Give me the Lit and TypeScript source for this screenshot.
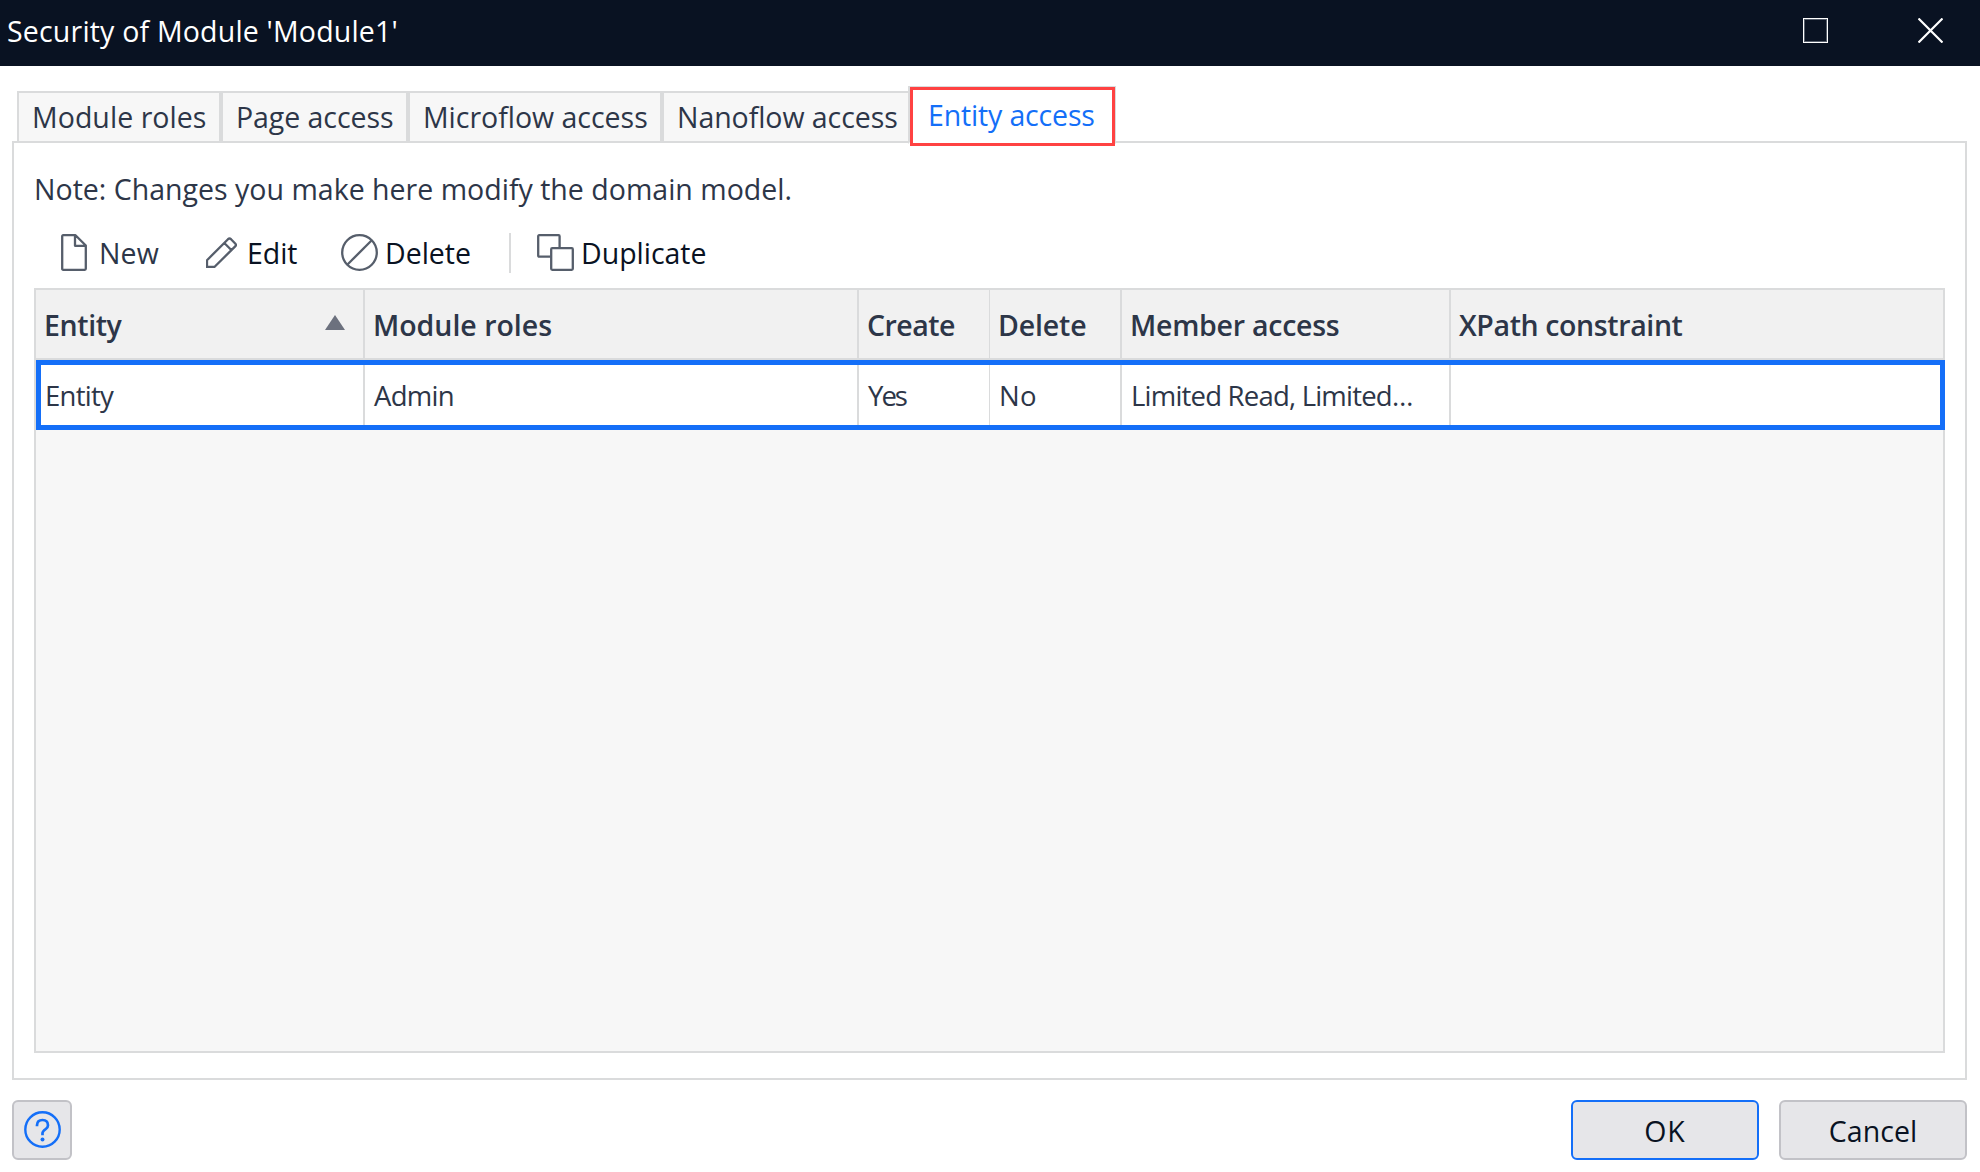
import { LitElement, html, css, svg, nothing } from "lit";
import { customElement, property } from "lit/decorators.js";
import { classMap } from "lit/directives/class-map.js";

/** Text whose tracking is adjusted so that it occupies a fixed advance width. */
@customElement("ui-label")
class UiLabel extends LitElement {
  @property() text = "";
  @property({ type: Number }) span = 0;

  static styles = css`
    :host { display: block; flex: none; }
    .text { display: inline-block; white-space: pre; vertical-align: top; }
  `;

  render() {
    return html`<span class="text">${this.text}</span>`;
  }

  updated() {
    const el = this.renderRoot.querySelector(".text") as HTMLElement;
    el.style.letterSpacing = "0px";
    const natural = el.getBoundingClientRect().width;
    el.style.letterSpacing = `${(this.span - natural) / this.text.length}px`;
  }
}

const label = (text: string, span: number) =>
  html`<ui-label .text=${text} .span=${span}></ui-label>`;

const icons = {
  file: svg`<path d="M1.2 2.2 Q1.2 1.2 2.2 1.2 H14.5 L24.8 11.5 V34.8 Q24.8 35.8 23.8 35.8 H2.2 Q1.2 35.8 1.2 34.8 Z M14 1.2 V11.8 H24.8"/>`,
  pencil: svg`<path d="M1 30 V23.2 L22 2.2 Q23.5 .8 25 2.2 L29.2 6.5 Q30.6 8 29.2 9.4 L8.4 30 Z M18.3 6 L25.3 13"/>`,
  forbid: svg`<circle cx="18.5" cy="18.5" r="17.3"/><path d="M6.5 30.5 L30.5 6.5"/>`,
  copy: svg`<path d="M13.5 22.6 H2.2 Q1.2 22.6 1.2 21.6 V2.2 Q1.2 1.2 2.2 1.2 H21.6 Q22.6 1.2 22.6 2.2 V13.5"/><rect x="14.2" y="14.2" width="21.6" height="21.6" rx="1"/>`,
};

const tabs = [
  { text: "Module roles", span: 174.5 },
  { text: "Page access", span: 157.5 },
  { text: "Microflow access", span: 224.7 },
  { text: "Nanoflow access", span: 220.7 },
  { text: "Entity access", span: 166.8, active: true },
];

const columns = [
  { head: "Entity", headSpan: 77.5, cell: "Entity", cellSpan: 68, sorted: true },
  { head: "Module roles", headSpan: 179, cell: "Admin", cellSpan: 80 },
  { head: "Create", headSpan: 88, cell: "Yes", cellSpan: 38, thin: true },
  { head: "Delete", headSpan: 88.5, cell: "No", cellSpan: 38 },
  { head: "Member access", headSpan: 209.5, cell: "Limited Read, Limited…", cellSpan: 281.5 },
  { head: "XPath constraint", headSpan: 223.5, cell: "", cellSpan: 0, last: true },
];

@customElement("app-root")
class AppRoot extends LitElement {
  static styles = css`
    :host {
      display: flex;
      flex-direction: column;
      height: 1172px;
      background: #fff;
      color: #2d3648;
      font-family: "Open Sans", "Noto Sans", sans-serif;
      font-size: 28.5px;
      line-height: 40px;
      overflow: hidden;
    }
    * { box-sizing: border-box; }
    svg { display: block; flex: none; fill: none; }

    .titlebar {
      flex: none;
      display: flex;
      align-items: center;
      height: 66px;
      padding: 0 37px 5px 7px;
      background: #091222;
      color: #fff;
    }
    .controls { display: flex; gap: 90px; margin-left: auto; }

    .tabs {
      flex: none;
      display: flex;
      align-items: flex-start;
      height: 75px;
      padding: 25px 0 0 17px;
    }
    .tab {
      display: flex;
      align-items: center;
      height: 52px;
      padding: 0 12.5px 0 13px;
      border: 2px solid #dadbdc;
      background: #f7f7f7;
    }
    .tab:nth-child(1) { width: 204px; }
    .tab:nth-child(2) { width: 187px; }
    .tab:nth-child(3) { width: 254px; }
    .tab:nth-child(4) { width: 250px; }
    .tab.active {
      position: relative;
      z-index: 1;
      height: 58px;
      width: 208px;
      margin: -5px 0 0 -4px;
      padding: 0 0 0 18px;
      background: #fff;
      border-bottom-color: #fff;
      color: #146ff8;
    }
    .marker {
      position: absolute;
      inset: -1px -1px -4px 0;
      border: 3px solid #ff4242;
    }

    .panel {
      flex: none;
      display: flex;
      flex-direction: column;
      height: 939px;
      margin: 0 13px 0 12px;
      padding: 26px 20px 25px;
      border: 2px solid #dadbdc;
    }
    .note { height: 40px; }
    .toolbar {
      display: flex;
      align-items: center;
      height: 40px;
      margin: 24px 0 15px;
      padding-left: 27px;
      color: #091222;
    }
    .tool { display: flex; align-items: center; }
    .tool svg { margin-bottom: 1px; stroke: #565e6b; stroke-width: 2.3; stroke-linejoin: round; }
    .tool.new { gap: 12px; width: 145px; color: #2d3648; }
    .tool.edit { gap: 10px; width: 135px; }
    .tool.delete { gap: 7px; width: 168px; }
    .tool.copy { gap: 7px; }
    .divider { width: 2px; height: 40px; margin-right: 26px; background: #dadbdc; }

    .table {
      flex: 1;
      border: 2px solid #dadbdc;
      background: #f7f7f7;
    }
    .row {
      display: grid;
      grid-template-columns: 329px 494px 131px 132px 329px 1fr;
    }
    .head {
      height: 70px;
      border-bottom: 2px solid #dadbdc;
      background: #f1f1f1;
      font-weight: 600;
    }
    .selected {
      position: relative;
      height: 70px;
      margin-right: -2px;
      background: #fff;
      font-size: 27.5px;
    }
    .selected::after {
      content: "";
      position: absolute;
      inset: 0;
      border: 5px solid #146ff8;
    }
    .cell {
      display: flex;
      align-items: center;
      justify-content: space-between;
      padding: 2px 18px 0 8px;
      border-right: 2px solid #dadbdc;
    }
    .selected .cell { padding-left: 9px; }
    .cell.thin { border-right-width: 1px; }
    .cell.last { border-right: 0; }
    .sort { margin-top: -6px; fill: #6c717e; }

    .footer {
      display: flex;
      gap: 20px;
      padding: 20px 13px 0 12px;
      color: #091222;
    }
    .button {
      display: flex;
      align-items: center;
      justify-content: center;
      width: 188px;
      height: 60px;
      padding: 2px 0 0;
      border: 2px solid #c2c2c7;
      border-radius: 6px;
      background: #e6e6e9;
      color: inherit;
      font: inherit;
    }
    .button.primary { border-color: #146ff8; }
    .button.help { width: 60px; padding: 0 0 1px 1px; margin-right: auto; }
  `;

  private tool(kind: string, w: number, h: number, icon: unknown, text: string, span: number) {
    return html`<div class="tool ${kind}">
      <svg width=${w} height=${h} viewBox="0 0 ${w} ${h}">${icon}</svg>${label(text, span)}
    </div>`;
  }

  render() {
    return html`
      <header class="titlebar">
        ${label("Security of Module 'Module1'", 391)}
        <div class="controls">
          <svg width="25" height="25"><rect x="1.5" y="1.5" width="22" height="22" stroke="#565e6b"/><rect x=".5" y=".5" width="24" height="24" stroke="#fff"/></svg>
          <svg width="25" height="25"><path d="M.5 .5 L24.5 24.5 M24.5 .5 L.5 24.5" stroke="#fff" stroke-width="2.2"/></svg>
        </div>
      </header>
      <nav class="tabs">
        ${tabs.map((t) => html`<div class=${classMap({ tab: true, active: !!t.active })}>
          ${label(t.text, t.span)}${t.active ? html`<div class="marker"></div>` : nothing}
        </div>`)}
      </nav>
      <main class="panel">
        <div class="note">${label("Note: Changes you make here modify the domain model.", 758)}</div>
        <div class="toolbar">
          ${this.tool("new", 26, 37, icons.file, "New", 60)}
          ${this.tool("edit", 31, 31, icons.pencil, "Edit", 50.5)}
          ${this.tool("delete", 37, 37, icons.forbid, "Delete", 86)}
          <div class="divider"></div>
          ${this.tool("copy", 37, 37, icons.copy, "Duplicate", 125.5)}
        </div>
        <div class="table">
          <div class="row head">
            ${columns.map((c) => html`<div class=${classMap({ cell: true, thin: !!c.thin, last: !!c.last })}>
              ${label(c.head, c.headSpan)}
              ${c.sorted ? html`<svg class="sort" width="20" height="15"><path d="M10 0 L20 15 H0 Z"/></svg>` : nothing}
            </div>`)}
          </div>
          <div class="row selected">
            ${columns.map((c) => html`<div class=${classMap({ cell: true, thin: !!c.thin, last: !!c.last })}>
              ${c.cell ? label(c.cell, c.cellSpan) : nothing}
            </div>`)}
          </div>
        </div>
      </main>
      <footer class="footer">
        <button class="button help" aria-label="Help">
          <svg width="37" height="37" stroke="#146ff8" stroke-width="2.4">
            <circle cx="18.5" cy="18.5" r="17.2"/>
            <path d="M13 15.2 V14.2 Q13.2 9 18.5 9 Q24 9 24 14.2 Q24 16.4 21.8 18 Q18.5 20.4 18.5 22 V24.2" stroke-width="2.7"/>
            <circle cx="18.5" cy="28.4" r="2" fill="#146ff8" stroke="none"/>
          </svg>
        </button>
        <button class="button primary">${label("OK", 41.5)}</button>
        <button class="button">${label("Cancel", 88.5)}</button>
      </footer>
    `;
  }
}
